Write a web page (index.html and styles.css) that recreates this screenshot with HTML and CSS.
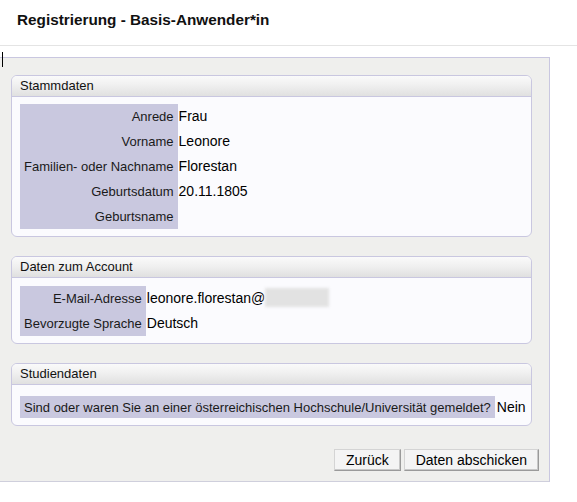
FILE: index.html
```html
<!DOCTYPE html>
<html lang="de">
<head>
<meta charset="utf-8">
<title>Registrierung</title>
<link rel="stylesheet" href="styles.css">
</head>
<body>
<header class="page-head">
  <h1 class="title">Registrierung - Basis-Anwender*in</h1>
</header>
<div class="spacer"><span class="caret"></span></div>
<main class="content">
  <section class="panel">
    <h2 class="panel-head">Stammdaten</h2>
    <div class="panel-body">
      <div class="fields">
        <div class="label">Anrede</div><div class="value">Frau</div>
        <div class="label">Vorname</div><div class="value">Leonore</div>
        <div class="label">Familien- oder Nachname</div><div class="value">Florestan</div>
        <div class="label">Geburtsdatum</div><div class="value">20.11.1805</div>
        <div class="label">Geburtsname</div><div class="value"></div>
      </div>
    </div>
  </section>
  <section class="panel">
    <h2 class="panel-head">Daten zum Account</h2>
    <div class="panel-body account">
      <div class="fields">
        <div class="label">E-Mail-Adresse</div><div class="value">leonore.florestan@<span class="blurred"></span></div>
        <div class="label">Bevorzugte Sprache</div><div class="value">Deutsch</div>
      </div>
    </div>
  </section>
  <section class="panel">
    <h2 class="panel-head">Studiendaten</h2>
    <div class="panel-body study">
      <div class="fields single">
        <div class="label">Sind oder waren Sie an einer österreichischen Hochschule/Universität gemeldet?</div><div class="value">Nein</div>
      </div>
    </div>
  </section>
  <div class="actions">
    <button class="btn btn-back" type="button">Zurück</button>
    <button class="btn btn-submit" type="button">Daten abschicken</button>
  </div>
</main>
</body>
</html>
```
FILE: styles.css
```css
* { box-sizing: border-box; }
html, body { margin: 0; padding: 0; background: #ffffff; }
body {
  font-family: "Liberation Sans", Arial, sans-serif;
  color: #000;
  width: 577px;
}
.page-head {
  height: 46px;
  border-bottom: 1px solid #e4e4e4;
  padding: 10px 0 0 17px;
}
.title {
  margin: 0;
  font-size: 15.3px;
  font-weight: bold;
  line-height: 19px;
  color: #111;
}
.spacer {
  height: 11px;
  position: relative;
}
.caret {
  position: absolute;
  left: 2px;
  top: 6px;
  width: 1px;
  height: 15px;
  background: #000;
  z-index: 2;
}
.content {
  width: 550px;
  background: #efefed;
  border-top: 1px solid #c9c7e0;
  border-right: 1px solid #c9c7e0;
  border-bottom: 1px solid #cfcfdc;
  padding: 17px 17px 10px 11px;
  display: flex;
  flex-direction: column;
  gap: 19px;
}
.panel {
  background: #fbfbfe;
  border: 1px solid #c9c7e0;
  border-radius: 6px;
  overflow: hidden;
}
.panel-head {
  margin: 0;
  height: 21px;
  padding: 0 0 0 8px;
  font-size: 13px;
  font-weight: normal;
  line-height: 20px;
  color: #111;
  background: linear-gradient(#fafafa, #f0f0f0 45%, #e0e0e0);
  border-bottom: 1px solid #c9c7e0;
}
.panel-body {
  padding: 7px 8px 7px 8px;
}
.panel-body.account { padding-top: 8px; padding-bottom: 7px; }
.panel-body.study { padding-top: 11px; padding-bottom: 7px; }
.fields {
  display: grid;
  grid-template-columns: max-content max-content;
  grid-auto-rows: 25px;
  align-items: stretch;
}
.fields.single { grid-auto-rows: 22px; }
.label {
  background: #c9c8df;
  font-size: 13px;
  line-height: 26px;
  text-align: right;
  padding: 0 4px 0 4px;
  color: #1a1a1a;
}
.single .label { line-height: 23px; }
.value {
  font-size: 14px;
  line-height: 24px;
  padding-left: 1px;
  color: #000;
  display: flex;
  align-items: flex-start;
}
.single .value { line-height: 22px; padding-left: 2px; }
.blurred {
  display: inline-block;
  width: 64px;
  height: 19px;
  margin-top: 2px;
  background: #e2e2e2;
  filter: blur(1.5px);
}
.actions {
  display: flex;
  justify-content: flex-end;
  gap: 3px;
  margin-top: 4px;
}
.btn {
  font-family: "Liberation Sans", Arial, sans-serif;
  font-size: 14px;
  color: #000;
  height: 22px;
  background: #f4f4f4;
  border: 1px solid;
  border-color: #d4d4d4 #9a9a9a #9a9a9a #d4d4d4;
  border-radius: 0;
  box-shadow: inset -1px -1px 0 #c8c8c8;
}
.btn-back { padding: 0 11px; }
.btn-submit { padding: 0 11px; margin-right: -7px; }
```
